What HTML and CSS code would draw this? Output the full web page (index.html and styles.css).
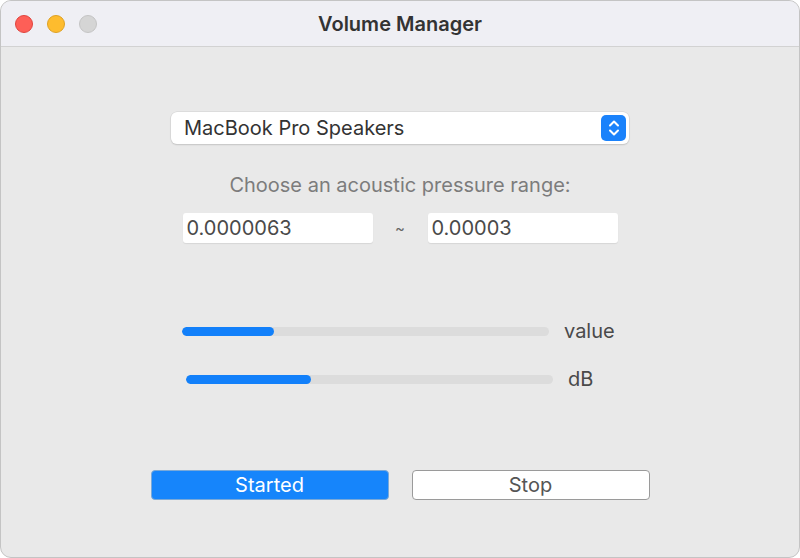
FILE: index.html
```html
<!DOCTYPE html>
<html>
<head>
<meta charset="utf-8">
<link rel="stylesheet" href="styles.css">
</head>
<body>
<div class="window">
  <div class="titlebar">
    <div class="lights">
      <span class="light red"></span>
      <span class="light yellow"></span>
      <span class="light gray"></span>
    </div>
    <div class="title">Volume Manager</div>
  </div>
  <div class="content">
    <div class="popup">
      <span class="popup-text">MacBook Pro Speakers</span>
      <span class="stepper">
        <svg width="14" height="20" viewBox="0 0 14 20"><path d="M3 7.5 L7 3.5 L11 7.5" fill="none" stroke="#fff" stroke-width="2" stroke-linecap="round" stroke-linejoin="round"/><path d="M3 12.5 L7 16.5 L11 12.5" fill="none" stroke="#fff" stroke-width="2" stroke-linecap="round" stroke-linejoin="round"/></svg>
      </span>
    </div>
    <div class="prompt">Choose an acoustic pressure range:</div>
    <div class="range">
      <div class="field">0.0000063</div>
      <div class="tilde">~</div>
      <div class="field">0.00003</div>
    </div>
    <div class="meters">
      <div class="meter-row">
        <div class="track"><div class="fill" style="width:25%"></div></div>
        <span class="meter-label">value</span>
      </div>
      <div class="meter-row second">
        <div class="track"><div class="fill" style="width:34%"></div></div>
        <span class="meter-label">dB</span>
      </div>
    </div>
    <div class="buttons">
      <button class="btn primary">Started</button>
      <button class="btn">Stop</button>
    </div>
  </div>
</div>
</body>
</html>
```
FILE: styles.css
```css
html, body {
  margin: 0;
  padding: 0;
  background: #ffffff;
}
body {
  font-family: "Inter", "Liberation Sans", sans-serif;
}
.window {
  width: 800px;
  height: 558px;
  box-sizing: border-box;
  border: 1px solid #c4c4c4;
  border-radius: 11px;
  overflow: hidden;
  background: #e9e9e9;
  display: flex;
  flex-direction: column;
}
.titlebar {
  height: 45px;
  flex: none;
  background: #efeff4;
  border-bottom: 1px solid #d2d2d2;
  position: relative;
  display: flex;
  align-items: center;
  justify-content: center;
}
.lights {
  position: absolute;
  left: 14px;
  top: 14px;
  display: flex;
  gap: 14px;
}
.light {
  width: 18px;
  height: 18px;
  border-radius: 50%;
  box-sizing: border-box;
}
.red { background: #fe5f57; border: 1px solid #e0443e; }
.yellow { background: #febc2e; border: 1px solid #dea123; }
.gray { background: #d5d5d5; border: 1px solid #c4c4c4; }
.title {
  font-size: 20px;
  font-weight: 600;
  color: #333;
  margin-top: 1px;
}
.content {
  flex: 1;
  display: flex;
  flex-direction: column;
  align-items: center;
  padding-top: 65px;
}
.popup {
  width: 458px;
  height: 32px;
  box-sizing: border-box;
  background: #fff;
  border-radius: 6px;
  box-shadow: 0 0 0 0.5px #d0d0d0, 0 1px 1.5px rgba(0,0,0,0.18);
  display: flex;
  align-items: center;
  justify-content: space-between;
  padding: 0 3px 0 13px;
}
.popup-text {
  font-size: 20px;
  color: #333;
}
.stepper {
  width: 25px;
  height: 26px;
  background: #1a82fb;
  border-radius: 5px;
  display: flex;
  align-items: center;
  justify-content: center;
}
.prompt {
  margin-top: 30px;
  font-size: 20px;
  line-height: 22px;
  color: #7c7c7c;
}
.range {
  margin-top: 17px;
  display: flex;
  align-items: center;
}
.field {
  width: 190px;
  height: 30px;
  box-sizing: border-box;
  background: #fff;
  border-radius: 3px;
  box-shadow: 0 1px 1px rgba(0,0,0,0.08);
  font-size: 20px;
  color: #4a4a4a;
  padding-left: 4px;
  line-height: 30px;
}
.tilde {
  width: 55px;
  text-align: center;
  font-size: 15px;
  color: #666;
  padding-top: 1px;
}
.meters {
  margin-top: 78px;
  display: flex;
  flex-direction: column;
  gap: 28px;
}
.meter-row {
  display: flex;
  align-items: center;
  gap: 15px;
  width: 432px;
  height: 20px;
}
.meter-row.second {
  margin-left: 4px;
}
.track {
  width: 367px;
  height: 9px;
  background: #dcdcdc;
  border-radius: 5px;
  overflow: hidden;
  flex: none;
}
.fill {
  height: 100%;
  background: #1280fa;
  border-radius: 5px;
}
.meter-label {
  font-size: 20px;
  color: #4a4a4a;
  line-height: 20px;
}
.buttons {
  margin-top: 81px;
  display: flex;
  gap: 23px;
}
.btn {
  width: 238px;
  height: 30px;
  box-sizing: border-box;
  border-radius: 4px;
  font-family: "Inter", "Liberation Sans", sans-serif;
  font-size: 20px;
  background: #fff;
  border: 1px solid #9a9a9a;
  color: #555;
  padding: 0;
}
.btn.primary {
  background: #1685fb;
  border-color: #7aa9d8;
  color: #fff;
}
```
